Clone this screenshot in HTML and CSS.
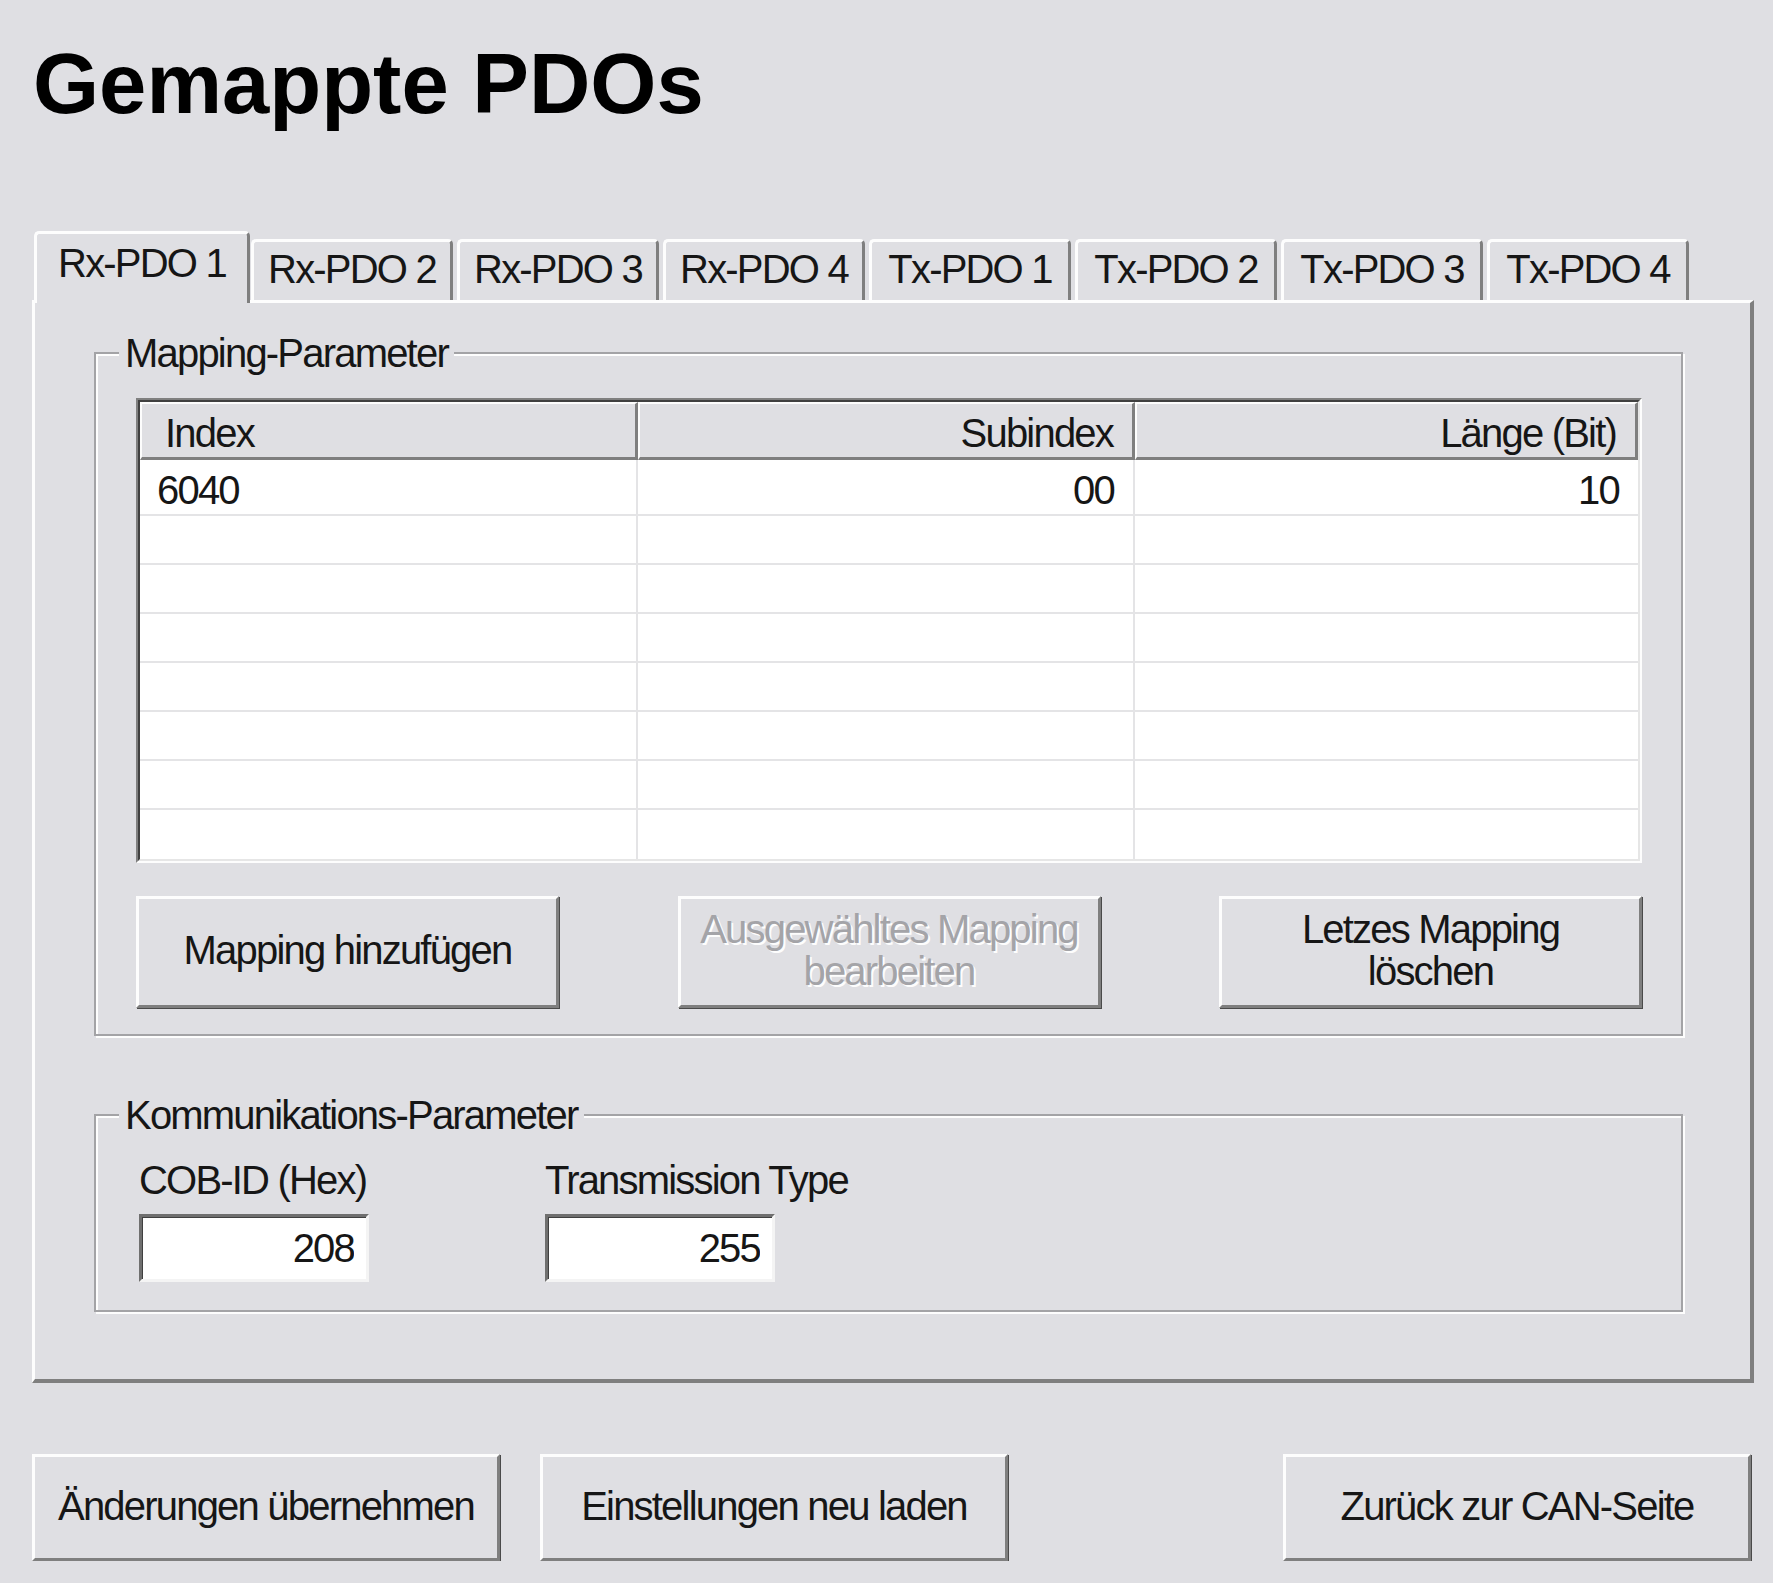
FILE: index.html
```html
<!DOCTYPE html>
<html>
  <head>
    <meta charset="UTF-8">
    <title>Gemappte PDOs</title>
    <link rel="stylesheet" href="styles.css">
  </head>
  <body>
    <div class="page">
      <h1 class="title">Gemappte PDOs</h1>

      <div class="tabs">
        <div class="tab active">Rx-PDO 1</div>
        <div class="tab">Rx-PDO 2</div>
        <div class="tab">Rx-PDO 3</div>
        <div class="tab">Rx-PDO 4</div>
        <div class="tab">Tx-PDO 1</div>
        <div class="tab">Tx-PDO 2</div>
        <div class="tab">Tx-PDO 3</div>
        <div class="tab">Tx-PDO 4</div>
      </div>

      <div class="tab-panel">
        <div class="group group-mapping">
          <span class="group-title">Mapping-Parameter</span>

          <div class="grid-frame">
            <table class="grid">
              <colgroup>
                <col class="col-index">
                <col class="col-sub">
                <col class="col-len">
              </colgroup>
              <thead>
                <tr>
                  <th class="left">Index</th>
                  <th>Subindex</th>
                  <th>Länge (Bit)</th>
                </tr>
              </thead>
              <tbody>
                <tr class="first">
                  <td class="left">6040</td>
                  <td>00</td>
                  <td>10</td>
                </tr>
                <tr><td></td><td></td><td></td></tr>
                <tr><td></td><td></td><td></td></tr>
                <tr><td></td><td></td><td></td></tr>
                <tr><td></td><td></td><td></td></tr>
                <tr><td></td><td></td><td></td></tr>
                <tr><td></td><td></td><td></td></tr>
                <tr><td></td><td></td><td></td></tr>
              </tbody>
            </table>
          </div>

          <div class="group-buttons">
            <button class="btn btn-small" type="button">Mapping hinzufügen</button>
            <button class="btn btn-small" type="button" disabled>Ausgewähltes Mapping<br>bearbeiten</button>
            <button class="btn btn-small" type="button">Letzes Mapping<br>löschen</button>
          </div>
        </div>

        <div class="group group-comm">
          <span class="group-title">Kommunikations-Parameter</span>
          <div class="fields">
            <label class="field">
              <span>COB-ID (Hex)</span>
              <input type="text" value="208" readonly>
            </label>
            <label class="field">
              <span>Transmission Type</span>
              <input type="text" value="255" readonly>
            </label>
          </div>
        </div>
      </div>

      <div class="actions">
        <button class="btn btn-large" type="button">Änderungen übernehmen</button>
        <button class="btn btn-large" type="button">Einstellungen neu laden</button>
        <button class="btn btn-large btn-back" type="button">Zurück zur CAN-Seite</button>
      </div>
    </div>
  </body>
</html>
```

FILE: styles.css
```css
* {
  box-sizing: border-box;
}

body {
  margin: 0;
  padding: 0;
  background-color: #dfdfe3;
  color: #161616;
  font-family: "Liberation Sans", Arial, sans-serif;
  font-size: 40px;
  line-height: 44px;
  letter-spacing: -1.8px; /* the old bitmap UI font is narrow */
}

.page {
  padding: 41px 0 0 32px;
  width: 1754px;
}

.title {
  margin: 0;
  font-size: 85px;
  line-height: 85px;
  font-weight: bold;
  letter-spacing: 0;
  color: #000;
  padding-left: 1px;
}

/* tab strip */
.tabs {
  display: flex;
  align-items: flex-end;
  height: 69px;
  margin-top: 105px;
  padding-left: 2px;
}

.tab {
  width: 202px;
  height: 61px;
  margin-right: 4px;
  padding-top: 5px;
  text-align: center;
  white-space: nowrap;
  border-top: 3px solid #fdfdfd;
  border-left: 3px solid #fdfdfd;
  border-right: 3px solid #7f7f7f;
  border-radius: 5px 5px 0 0;
}

.tab.active {
  position: relative;
  z-index: 1;
  width: 216px;
  height: 72px;
  margin-right: 1px;
  margin-bottom: -3px;
  padding-top: 7px;
  background-color: #dfdfe3;
}

.tab-panel {
  width: 1722px;
  padding: 49px 0 67px 59px;
  border-top: 3px solid #fdfdfd;
  border-left: 3px solid #fdfdfd;
  border-right: 4px solid #7f7f7f;
  border-bottom: 4px solid #7f7f7f;
}

/* group boxes */
.group {
  position: relative;
  width: 1589px;
  border: 2px solid #a3a3a6;
  box-shadow: inset 2px 2px 0 #fdfdfd, 2px 2px 0 #fdfdfd;
}

.group-title {
  position: absolute;
  top: -23px;
  left: 23px;
  padding: 0 6px;
  background-color: #dfdfe3;
}

.group-mapping {
  height: 684px;
  padding: 44px 39px 0 40px;
}

.group-comm {
  height: 198px;
  margin-top: 78px;
  padding: 42px 0 0 43px;
}

/* mapping table */
.grid-frame {
  width: 1506px;
  border: 2px solid;
  border-color: #808080 #fdfdfd #fdfdfd #808080;
}

.grid {
  width: 100%;
  border-collapse: separate;
  border-spacing: 0;
  table-layout: fixed;
  background-color: #fff;
  border: 2px solid;
  border-color: #404040 #e6e6e6 #e6e6e6 #404040;
}

.col-index {
  width: 498px;
}

.col-sub {
  width: 497px;
}

.grid th {
  height: 58px;
  padding: 4px 19px 0 23px;
  font-weight: normal;
  text-align: right;
  white-space: nowrap;
  background-color: #dfdfe3;
  border-top: 2px solid #fdfdfd;
  border-left: 2px solid #fdfdfd;
  border-right: 3px solid #7f7f7f;
  border-bottom: 3px solid #7f7f7f;
}

.grid td {
  height: 49px;
  padding: 0 19px 0 17px;
  text-align: right;
  border-bottom: 2px solid #e4e4e6;
  border-right: 2px solid #e4e4e6;
}

.grid tr.first td {
  height: 56px;
  padding-top: 6px;
}

.grid td:last-child {
  border-right: none;
}

.grid tr:last-child td {
  border-bottom: none;
}

.grid .left {
  text-align: left;
}

.group-buttons {
  display: flex;
  justify-content: space-between;
  margin-top: 33px;
}

/* buttons */
.btn {
  font-family: inherit;
  font-size: inherit;
  letter-spacing: inherit;
  line-height: 42px;
  color: #161616;
  background-color: #dfdfe3;
  border: 3px solid;
  border-color: #fdfdfd #7f7f7f #7f7f7f #fdfdfd;
  box-shadow: 1px 1px 0 #4a4a4a;
  padding: 0 0 4px;
  white-space: nowrap;
  cursor: pointer;
}

.btn-small {
  width: 423px;
  height: 112px;
}

.btn:disabled {
  color: #a4a4a8;
  text-shadow: 2px 2px 0 #fdfdfd;
  cursor: default;
}

.actions {
  display: flex;
  gap: 40px;
  margin-top: 71px;
  width: 1719px;
}

.btn-large {
  width: 468px;
  height: 107px;
}

.btn-back {
  margin-left: auto;
}

/* communication fields */
.fields {
  display: flex;
  gap: 176px;
}

.field {
  display: flex;
  flex-direction: column;
  gap: 12px;
  width: 230px;
  white-space: nowrap;
}

.field input {
  width: 230px;
  height: 68px;
  padding: 0 12px 0 0;
  font-family: inherit;
  font-size: inherit;
  letter-spacing: inherit;
  color: #161616;
  text-align: right;
  background-color: #fff;
  border: 3px solid;
  border-color: #6f6f6f #f4f4f4 #f4f4f4 #6f6f6f;
  box-shadow: inset 1px 1px 0 #404040;
  outline: none;
}
```
